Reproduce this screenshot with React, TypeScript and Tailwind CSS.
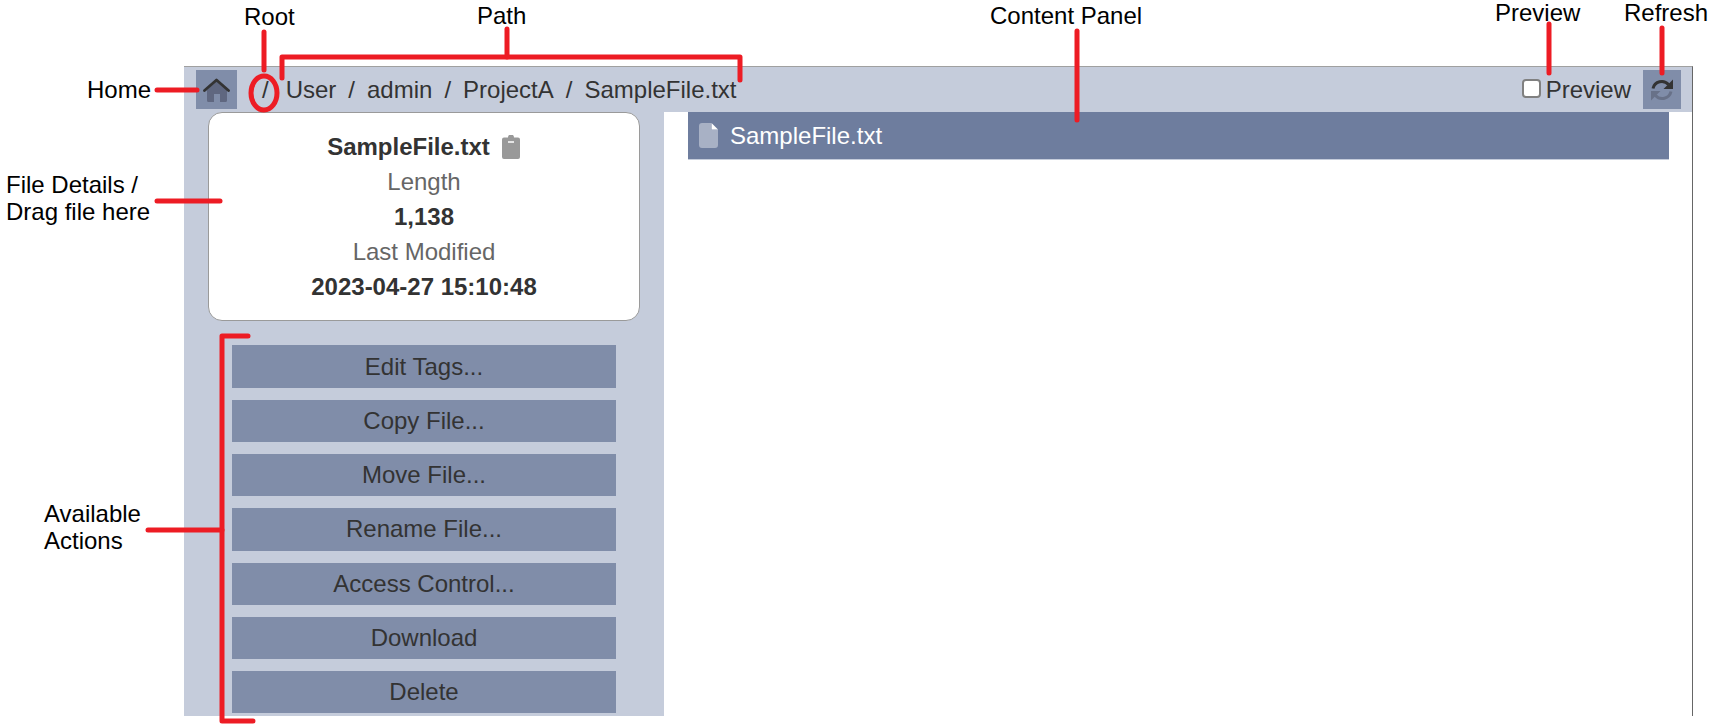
const font = "font-['Liberation_Sans',Arial,sans-serif]";

function HomeIcon() {
  return (
    <svg width="27" height="24" viewBox="0 0 27 24" className="block">
      <path d="M4 12L13.500 3L24 12V22.500a1.500 1.500 0 0 1-1.500 1.500H17V16H11V24H5.500A1.500 1.500 0 0 1 4 22.500z" fill="#5f6780" />
      <path d="M1.500 12.500L13.500 2L25.500 12.500" fill="none" stroke="#333333" strokeWidth="2.800" strokeLinecap="round" strokeLinejoin="round" />
    </svg>
  );
}

function RefreshIcon() {
  return (
    <svg width="24" height="24" viewBox="0 0 24 24" className="block">
      <path d="M3 10.500A9 9 0 0 1 18.500 6.500" fill="none" stroke="#333333" strokeWidth="3" />
      <path d="M23 1.500V11H13.500z" fill="#333333" />
      <g transform="rotate(180 12 12)">
        <path d="M3 10.500A9 9 0 0 1 18.500 6.500" fill="none" stroke="#687188" strokeWidth="3" />
        <path d="M23 1.500V11H13.500z" fill="#687188" />
      </g>
    </svg>
  );
}

const actions = ["Edit Tags...", "Copy File...", "Move File...", "Rename File...", "Access Control...", "Download", "Delete"];

function Annotations() {
  const labels: [string, string][] = [
    ["Root", "left-[244px] top-[3px]"],
    ["Path", "left-[477px] top-[2px]"],
    ["Content Panel", "left-[990px] top-[2px]"],
    ["Preview", "left-[1495px] top-[-1px]"],
    ["Refresh", "left-[1624px] top-[-1px]"],
    ["Home", "left-[87px] top-[76px]"],
  ];
  return (
    <>
      <svg width="1713" height="727" className="absolute left-0 top-0 pointer-events-none" fill="none" stroke="#ed1c24" strokeWidth="5" strokeLinecap="round" strokeLinejoin="round">
        <path d="M157 90H197" />
        <path d="M264 32V70" />
        <ellipse cx="264" cy="93" rx="13" ry="17" />
        <path d="M282 78V57H740V80" />
        <path d="M507 29V57" />
        <path d="M1077 31V120" />
        <path d="M1549 24V73" />
        <path d="M1662 28V73" />
        <path d="M157 201H220" />
        <path d="M148 530H222" />
        <path d="M248 336H222V721H253" />
      </svg>
      {labels.map(([t, c]) => (
        <div key={t} className={`absolute text-[24px] leading-[28px] text-black ${c}`}>{t}</div>
      ))}
      <div className="absolute left-[6px] top-[171px] text-[24px] leading-[27px] text-black">File Details /<br />Drag file here</div>
      <div className="absolute left-[44px] top-[500px] text-[24px] leading-[27px] text-black">Available<br />Actions</div>
    </>
  );
}

export default function App() {
  return (
    <div className={`relative h-[727px] w-[1713px] overflow-hidden bg-white pl-[184px] pt-[66px] ${font}`}>
      <div className="flex h-[650px] w-[1509px] flex-col border-r border-t border-r-[#666] border-t-[#a0a0a0] bg-white">
        <div className="flex h-[45px] shrink-0 items-center justify-between bg-[#c5ccdb] pl-[12px] pr-[11px] text-[24px] text-[#333]">
          <div className="flex items-center">
            <div className="flex h-[39px] w-[41px] items-center justify-center bg-[#808da9]"><HomeIcon /></div>
            <div className="ml-[25px] flex items-center gap-[12px]">
              <span>/</span><span className="ml-[5px]">User</span><span>/</span><span>admin</span><span>/</span><span>ProjectA</span><span>/</span><span>SampleFile.txt</span>
            </div>
          </div>
          <div className="flex items-center">
            <input type="checkbox" className="mb-[3px] h-[19px] w-[19px] appearance-none rounded-[4px] border-2 border-[#808080] bg-white" />
            <span className="ml-[5px]">Preview</span>
            <div className="ml-[12px] flex h-[39px] w-[38px] items-center justify-center bg-[#808da9]"><RefreshIcon /></div>
          </div>
        </div>
        <div className="flex flex-1">
          <div className="w-[480px] shrink-0 bg-[#c5ccdb] px-[24px]">
            <div className="flex h-[209px] flex-col items-center rounded-[14px] border border-[#9a9a9a] bg-white pt-[16px] text-[24px] leading-[35px] text-[#333]">
              <div className="flex items-center font-bold">SampleFile.txt
                <svg width="20" height="24" viewBox="0 0 20 24" className="ml-[11px]"><path d="M3 2.500h4a3 3 0 0 1 6 0h4a2 2 0 0 1 2 2V22a2 2 0 0 1-2 2H3a2 2 0 0 1-2-2V4.500a2 2 0 0 1 2-2z" fill="#999" /><path d="M7 7h6" stroke="#fff" strokeWidth="1.500" /></svg>
              </div>
              <div className="text-[#666]">Length</div>
              <div className="font-bold">1,138</div>
              <div className="text-[#666]">Last Modified</div>
              <div className="font-bold">2023-04-27 15:10:48</div>
            </div>
            <div className="mt-[24.4px] flex flex-col gap-[12px] px-[24px]">
              {actions.map((a) => (
                <div key={a} className="flex h-[42.3px] items-center justify-center bg-[#808da9] text-[24px] text-[#333]">{a}</div>
              ))}
            </div>
          </div>
          <div className="flex-1 pl-[24px] pr-[23px]">
            <div className="flex h-[48px] items-center border-b border-[#c5ccdb] bg-[#6e7d9e] pl-[11px] text-[24px] text-white">
              <svg width="19" height="25" viewBox="0 0 19 25"><path d="M3 0h9v6.500H19V22a3 3 0 0 1-3 3H3a3 3 0 0 1-3-3V3a3 3 0 0 1 3-3z" fill="#a8b1c5" /><path d="M12.500 0L19 6.500h-6.500z" fill="#fff" /></svg>
              <span className="ml-[12px]">SampleFile.txt</span>
            </div>
          </div>
        </div>
      </div>
      <Annotations />
    </div>
  );
}
